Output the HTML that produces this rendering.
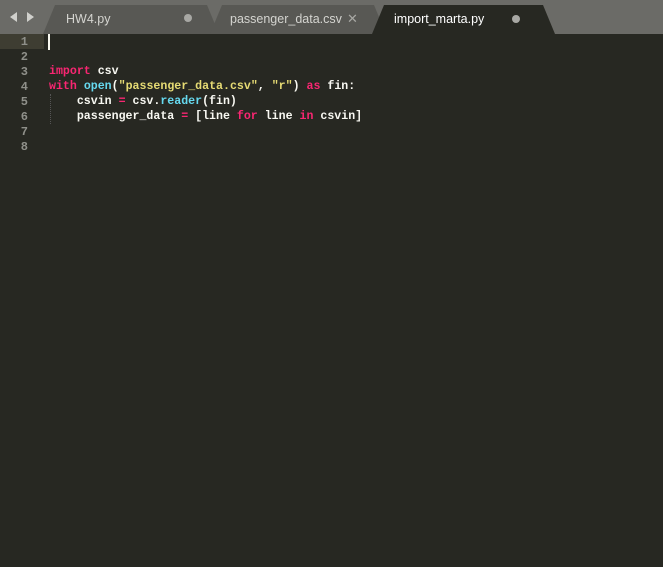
<!DOCTYPE html><html><head><style>
body{margin:0;width:663px;height:567px;background:#272822;overflow:hidden;position:relative;font-family:"Liberation Mono",monospace}
.bar{position:absolute;left:0;top:0;width:663px;height:34px;background:#6b6b67}
.tab{position:absolute;top:5px;height:29px}
.tab svg{position:absolute;left:0;top:0}
.tl{position:absolute;top:7px;font:12.5px "Liberation Sans",sans-serif}
.hl{position:absolute;left:0;top:34px;width:44px;height:15px;background:#3e3d32}
.ln{position:absolute;right:16px;color:#8f908a;font-size:12px;font-weight:bold}
.code{position:absolute;left:49px;font-size:11.6px;font-weight:bold;color:#f8f8f2;white-space:pre;line-height:15px}
.k{color:#f92672}.f{color:#66d9ef}.s{color:#e6db74}
</style></head><body>
<div class="bar"></div>
<svg style="position:absolute;left:10px;top:12px" width="24" height="10"><path d="M0 5L7 0V10Z M24 5L17 0V10Z" fill="#d0d0cc"/></svg>
<div class="tab" style="left:43px;width:176px"><svg width="176" height="29"><path d="M0 29L12 0H164L176 29Z" fill="#585854"/></svg><span class="tl" style="left:23px;color:#d4d4d0">HW4.py</span><span style="position:absolute;left:141px;top:9px;width:8px;height:8px;border-radius:50%;background:#a8a8a4"></span></div>
<div class="tab" style="left:210px;width:176px"><svg width="176" height="29"><path d="M0 29L12 0H164L176 29Z" fill="#585854"/></svg><span class="tl" style="left:20px;color:#d4d4d0">passenger_data.csv</span><span class="tl" style="left:137px;top:6px;color:#a8a8a4;font-size:13px">✕</span></div>
<div class="tab" style="left:372px;width:183px"><svg width="183" height="29"><path d="M0 29L12 0H171L183 29Z" fill="#272822"/></svg><span class="tl" style="left:22px;color:#fff">import_marta.py</span><span style="position:absolute;left:140px;top:10px;width:8px;height:8px;border-radius:50%;background:#a8a8a4"></span></div>
<div class="hl"></div>
<div style="position:absolute;left:48px;top:34px;width:2px;height:16px;background:#f8f8f0"></div>
<div style="position:absolute;left:50px;top:94px;height:30px;border-left:1px dotted #555"></div>
<div style="position:absolute;left:0;top:35px;width:44px;line-height:14.86px">
<div class="ln" style="top:0">1</div><div class="ln" style="top:15px">2</div><div class="ln" style="top:30px">3</div><div class="ln" style="top:45px">4</div><div class="ln" style="top:60px">5</div><div class="ln" style="top:75px">6</div><div class="ln" style="top:90px">7</div><div class="ln" style="top:105px">8</div></div>
<div class="code" style="top:64px"><span class="k">import</span> csv
<span class="k">with</span> <span class="f">open</span>(<span class="s">"passenger_data.csv"</span>, <span class="s">"r"</span>) <span class="k">as</span> fin:
    csvin <span class="k">=</span> csv.<span class="f">reader</span>(fin)
    passenger_data <span class="k">=</span> [line <span class="k">for</span> line <span class="k">in</span> csvin]</div>
</body></html>
